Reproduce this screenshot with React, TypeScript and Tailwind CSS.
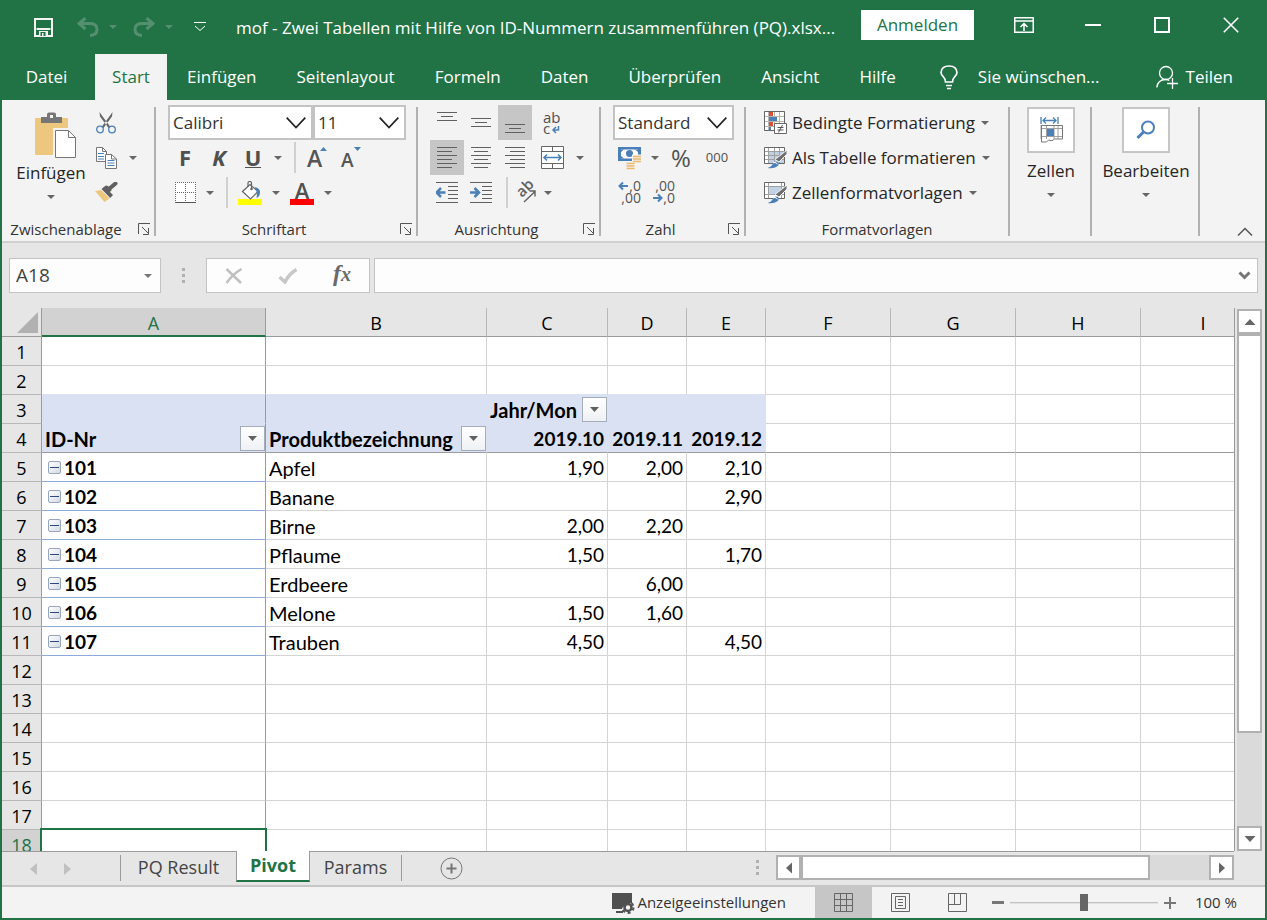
import React from 'react';
import clsx from 'clsx';

type Cell = string | undefined;

interface SheetRow {
  num: number;
  kind: 'empty' | 'head' | 'data';
  cells: Cell[];
}

const TABS = ['Einfügen', 'Seitenlayout', 'Formeln', 'Daten', 'Überprüfen', 'Ansicht', 'Hilfe'];

const COLUMNS = [
  { name: 'A', width: 224 },
  { name: 'B', width: 221 },
  { name: 'C', width: 121 },
  { name: 'D', width: 79 },
  { name: 'E', width: 79 },
  { name: 'F', width: 125 },
  { name: 'G', width: 125 },
  { name: 'H', width: 125 },
  { name: 'I', width: 125 },
];

const empty = (num: number): SheetRow => ({ num, kind: 'empty', cells: [] });

const ROWS: SheetRow[] = [
  empty(1),
  empty(2),
  { num: 3, kind: 'head', cells: ['', '', 'Jahr/Mon', '', ''] },
  { num: 4, kind: 'head', cells: ['ID-Nr', 'Produktbezeichnung', '2019.10', '2019.11', '2019.12'] },
  { num: 5, kind: 'data', cells: ['101', 'Apfel', '1,90', '2,00', '2,10'] },
  { num: 6, kind: 'data', cells: ['102', 'Banane', '', '', '2,90'] },
  { num: 7, kind: 'data', cells: ['103', 'Birne', '2,00', '2,20', ''] },
  { num: 8, kind: 'data', cells: ['104', 'Pflaume', '1,50', '', '1,70'] },
  { num: 9, kind: 'data', cells: ['105', 'Erdbeere', '', '6,00', ''] },
  { num: 10, kind: 'data', cells: ['106', 'Melone', '1,50', '1,60', ''] },
  { num: 11, kind: 'data', cells: ['107', 'Trauben', '4,50', '', '4,50'] },
  empty(12),
  empty(13),
  empty(14),
  empty(15),
  empty(16),
  empty(17),
  empty(18),
];

/* ---------- small shared pieces ---------- */

const Caret: React.FC<{ className?: string }> = ({ className }) => (
  <svg width="8" height="4" viewBox="0 0 8 4" className={clsx('shrink-0', className ?? 'text-[#666]')}>
    <path d="M0 0h8L4 4z" fill="currentColor" />
  </svg>
);

const CaretButton: React.FC<{ label: string }> = ({ label }) => (
  <button aria-label={label} className="flex h-[35px] w-4 items-center justify-center">
    <Caret />
  </button>
);

interface ToolProps {
  label: string;
  width?: string;
  active?: boolean;
  children: React.ReactNode;
}

const Tool: React.FC<ToolProps> = ({ label, width = 'w-[34px]', active, children }) => (
  <button
    aria-label={label}
    className={clsx('flex h-[35px] items-center justify-center text-[#505050]', width, active && 'bg-[#c6c6c6]')}
  >
    {children}
  </button>
);

const Combo: React.FC<{ label: string; value: string; width: string }> = ({ label, value, width }) => (
  <div className={clsx('relative h-[35px]', width)}>
    <select
      aria-label={label}
      className="h-full w-full appearance-none border-2 border-[#c3c3c3] bg-white pl-[3px] text-[17px] text-[#333] outline-none"
    >
      <option>{value}</option>
    </select>
    <svg width="20" height="12" viewBox="0 0 20 12" className="pointer-events-none absolute top-3 right-[7px]">
      <path d="M.7 .7L10 10.5L19.3 .7" fill="none" stroke="#222" strokeWidth="1.7" />
    </svg>
  </div>
);

const Divider = () => <div className="mr-1 ml-2 h-[31px] w-0.5 bg-[#d0d0d0]" />;

interface GroupProps {
  title?: string;
  launcher?: boolean;
  width: string;
  children: React.ReactNode;
}

const Group: React.FC<GroupProps> = ({ title, launcher, width, children }) => (
  <>
    <section className={clsx('flex shrink-0 flex-col pt-[5px]', width)}>
      <div className="h-[105px]">{children}</div>
      <div className="flex flex-1 items-end pb-0.5 text-[15px] leading-5 text-[#333]">
        <span className="flex-1 text-center">{title}</span>
        {launcher && (
          <button aria-label={`${title} Optionen`} className="mb-1 flex w-6 justify-end pr-1">
            <svg width="12" height="12" viewBox="0 0 12 12" fill="none" stroke="#555">
              <path d="M.5 11V.5H12M4 4l6.5 6.5M10.5 5v6.5H5" />
            </svg>
          </button>
        )}
      </div>
    </section>
    <div className="mt-[7px] mb-[5px] w-0.5 shrink-0 bg-[#b1b1b1]" />
  </>
);

/* ---------- icons ---------- */

const PasteIcon = () => (
  <svg width="52" height="47" viewBox="-10 0 52 47">
    <rect x="0" y="6" width="33" height="37" rx="1" fill="#eec77e" />
    <path d="M6 5h6V2.500q0-2 2-2h5q2 0 2 2V5h6v6H6z" fill="#767676" />
    <rect x="15" y="3" width="3" height="3" fill="#f3f3f3" />
    <path d="M19.500 17.500h15l7 7.500v21h-22z" fill="#fff" stroke="#f3f3f3" strokeWidth="3" />
    <path d="M20.500 18.500h13l7 7v20h-20z" fill="#fff" stroke="#767676" />
    <path d="M33.500 18.500v7h7" fill="none" stroke="#767676" />
  </svg>
);

const CutIcon = () => (
  <svg width="20" height="22" viewBox="0 0 20 22">
    <path d="M3.500 0L7 5L14.500 15L12.500 16L4 4.500zM16.500 0L13 5L5.500 15L7.500 16L16 4.500z" fill="#666" />
    <circle cx="4" cy="17.500" r="3.300" fill="#f3f3f3" stroke="#4a7fb8" strokeWidth="1.300" />
    <circle cx="16" cy="17.500" r="3.300" fill="#f3f3f3" stroke="#4a7fb8" strokeWidth="1.300" />
  </svg>
);

const CopyIcon = () => (
  <svg width="21" height="22" viewBox="0 0 21 22" fill="#fff" stroke="#767676">
    <path d="M.5.5h6l4 4v10H.5z" />
    <path d="M6.500.5v4h4" fill="none" />
    <path d="M2 6.500h6M2 9.500h6M2 12h6" stroke="#4a7fb8" />
    <path d="M9.500 7.500h6l5 4.500v9.500h-11z" />
    <path d="M15.500 7.500v4.500h5" fill="none" />
    <path d="M11.500 13.500h7M11.500 16h7M11.500 18.500h7" stroke="#4a7fb8" />
  </svg>
);

const BrushIcon = () => (
  <svg width="23" height="21" viewBox="0 0 23 21">
    <path d="M0 9l6-1l8.500 8.500L9.500 20z" fill="#eec77e" />
    <path d="M6.500 7l3-2.500L18 13l-2.800 3z" fill="#606060" />
    <path d="M11.500 5.500L14 8l-1 1M14 7l6.500-5.500" stroke="#606060" strokeWidth="4" fill="none" strokeLinecap="round" />
  </svg>
);

const BorderIcon = () => (
  <svg width="21" height="21" viewBox="0 0 21 21">
    <rect width="21" height="21" fill="#fff" />
    <path d="M0 .5h21M0 10.500h21M.5 0v21M10.500 0v21M20.500 0v21" stroke="#666" strokeDasharray="1 1" fill="none" />
    <path d="M0 20.500h21" stroke="#555" />
  </svg>
);

const FillIcon = () => (
  <svg width="24" height="24" viewBox="0 0 24 24">
    <rect y="18" width="24" height="6" fill="#ff0" />
    <path d="M4.500 10.500l7.500-7l8 7l-7.500 7.500z" fill="#fff" stroke="#666" strokeWidth="1.200" />
    <path d="M10 6V2q0-1.500 1.800-1.500Q13.500.5 13.500 2v6" fill="none" stroke="#666" strokeWidth="1.200" />
    <circle cx="13.500" cy="8" r="1.300" fill="#666" />
    <path d="M16.500 6q6 1 5.500 6q-.5 4-3.500 5q1.500-6-2-11z" fill="#4a7fb8" />
  </svg>
);

const FontColorIcon = () => (
  <span className="flex flex-col items-center">
    <span className="text-[22px] leading-[18px] font-semibold">A</span>
    <span className="h-[6px] w-6 bg-[#f00]" />
  </span>
);

const GrowFont = () => (
  <svg width="22" height="22" viewBox="0 0 22 22" className="overflow-visible">
    <text x="1" y="20" fontSize="23" fontWeight="600" fill="#555">A</text>
    <path d="M14 4h7L17.500 0z" fill="#4a7fb8" />
  </svg>
);

const ShrinkFont = () => (
  <svg width="22" height="22" viewBox="0 0 22 22" className="overflow-visible">
    <text x="1" y="20" fontSize="19" fontWeight="600" fill="#555">A</text>
    <path d="M14 0h7l-3.500 4z" fill="#4a7fb8" />
  </svg>
);

// stacks of text lines, given as [x, y, width]
const Lines: React.FC<{ lines: number[][]; children?: React.ReactNode }> = ({ lines, children }) => (
  <svg width="22" height="22" viewBox="0 0 22 22">
    {lines.map(([x, y, w]) => (
      <path key={y} d={`M${x} ${y + 0.5}h${w}`} stroke="#606060" />
    ))}
    {children}
  </svg>
);

const TOP = [[1, 0, 20], [5, 4, 12], [1, 8, 20]];
const MIDDLE = [[1, 6, 20], [5, 10, 12], [1, 14, 20]];
const BOTTOM = [[1, 12, 20], [5, 16, 12], [1, 20, 20]];
const LEFT = [[1, 0, 20], [1, 4, 15], [1, 8, 20], [1, 12, 15], [1, 16, 20], [1, 20, 15]];
const CENTER = [[1, 0, 20], [4, 4, 14], [1, 8, 20], [4, 12, 14], [1, 16, 20], [4, 20, 14]];
const RIGHT = [[1, 0, 20], [6, 4, 15], [1, 8, 20], [6, 12, 15], [1, 16, 20], [6, 20, 15]];
const INDENT = [[0, 0, 22], [12, 4, 10], [12, 8, 10], [12, 12, 10], [12, 16, 10], [0, 20, 22]];

const WrapIcon = () => (
  <svg width="20" height="24" viewBox="0 0 20 24" className="overflow-visible">
    <text x="1" y="12" fontSize="15" fontWeight="500" fill="#505050">ab</text>
    <text x="1" y="23" fontSize="15" fontWeight="500" fill="#505050">c</text>
    <path d="M16.500 15v4h-5M14 16l-3 3l3 3" fill="none" stroke="#4a7fb8" strokeWidth="1.500" />
  </svg>
);

const MergeIcon = () => (
  <svg width="23" height="23" viewBox="0 0 23 23" fill="none" stroke="#666">
    <path d="M.5.500h22v22H.5zM.5 5.500h22M.5 17.500h22M11.500.5v5M11.500 17.500v5" fill="#fff" />
    <path d="M3 11.500h17M6 8.500l-3 3l3 3M17 8.500l3 3l-3 3" stroke="#4a7fb8" strokeWidth="1.500" />
  </svg>
);

const OrientationIcon = () => (
  <svg width="22" height="22" viewBox="0 0 22 22" className="overflow-visible">
    <text x="0" y="0" fontSize="15" fontWeight="600" fill="#606060" transform="translate(7 16) rotate(-45)">ab</text>
    <path d="M9 20L20 9.500M14.500 9h5.500v5.500" fill="none" stroke="#606060" strokeWidth="1.400" />
  </svg>
);

const MoneyIcon = () => (
  <svg width="24" height="24" viewBox="0 0 24 24">
    <rect x="0" y="1" width="23" height="14" fill="#4a7fb8" />
    <path d="M3 3.500h17v9H3z" fill="#fff" />
    <path d="M3 3.500h3L3 6zM20 3.500h-3L20 6zM3 12.500h3L3 10z" fill="#4a7fb8" />
    <circle cx="11.500" cy="7.500" r="3.500" fill="#4a7fb8" />
    <path d="M14 8.500h10v9H18V23H7v-8h7z" fill="#f3f3f3" />
    <path d="M15 10.500h8M15 13h8M15 15.500h8M8.500 17.500h8M8.500 20h8M8.500 22.500h8" stroke="#eab96c" strokeWidth="1.700" />
  </svg>
);

const DecimalIcon: React.FC<{ less?: boolean }> = ({ less }) => (
  <svg width="24" height="26" viewBox="0 0 24 26" fontSize="14" fill="#555" className="overflow-visible">
    <text x="23" y="11" textAnchor="end">{less ? ',00' : ',0'}</text>
    <text x="23" y="23" textAnchor="end">{less ? ',0' : ',00'}</text>
    {less ? (
      <path d="M1 18h8M6 14.500l3.500 3.500L6 21.500" fill="none" stroke="#4a7fb8" strokeWidth="2" />
    ) : (
      <path d="M10 6H2M5 2.500L1.500 6L5 9.500" fill="none" stroke="#4a7fb8" strokeWidth="2" />
    )}
  </svg>
);

const StyleBrush = () => (
  <>
    <path d="M25 4v4l-8 8l-4-2.500z" fill="#707070" stroke="#f3f3f3" />
    <path d="M5.500 22q4-1 5.500-4.500q2-3 5-1.500q2 2.500-1 4.500q-3 2.500-9.500 1.500z" fill="#4a7fb8" />
    <path d="M11 17q2-1.500 4 .5l1 1" stroke="#fff" fill="none" />
  </>
);

const ConditionalIcon = () => (
  <svg width="26" height="24" viewBox="0 0 26 24">
    <path d="M2.500.5h20v19h-20zM2.500 5.500h20M2.500 10.500h20M2.500 15.500h20M6.500.5v19M12.500.5v19M17.500.5v19" fill="#fff" stroke="#b5b5b5" />
    <path d="M2.500.5h20v19h-20z" fill="none" stroke="#666" />
    <path d="M7 1h4v4H7zM7 11h4v4H7z" fill="#d8502f" />
    <path d="M7 6h8v4H7zM7 16h2v3H7z" fill="#4a7fb8" />
    <path d="M12.500 12.500h12v10h-12z" fill="#fff" stroke="#666" />
    <path d="M15.500 16.500h6M15.500 19h6M20.500 14l-4 7.500" stroke="#555" />
  </svg>
);

const FormatTableIcon = () => (
  <svg width="26" height="24" viewBox="0 0 26 24">
    <path d="M2.500 1.500h20v16h-20z" fill="#fff" />
    <path d="M7 6h15v12H7z" fill="#c0d2e6" />
    <path d="M2.500 5.500h20M2.500 9.500h20M2.500 13.500h20M6.500 1.500v16M12.500 1.500v16M17.500 1.500v16" stroke="#a0a0a0" />
    <path d="M2.500 1.500h20v16h-20z" fill="none" stroke="#666" />
    <StyleBrush />
  </svg>
);

const CellStyleIcon = () => (
  <svg width="26" height="24" viewBox="0 0 26 24">
    <path d="M2.500 1.500h20v16h-20z" fill="#fff" />
    <path d="M7 6h12v8H7z" fill="#c0d2e6" />
    <path d="M2.500 5.500h20M2.500 13.500h20M6.500 1.500v16M19.500 1.500v16" stroke="#a0a0a0" />
    <path d="M2.500 1.500h20v16h-20z" fill="none" stroke="#666" />
    <StyleBrush />
  </svg>
);

const CellsIcon = () => (
  <svg width="23" height="26" viewBox="0 0 23 26" fill="none">
    <path d="M1 0v7M18 0v7M3 3.500h13M6 .5l-3 3l3 3M13 .5l3 3l-3 3" stroke="#4a7fb8" strokeWidth="1.300" />
    <path d="M1 8v14M6.500 8v14M14 8v14M18 8v14M1 11.500h21M1 19.500h21" stroke="#a0a0a0" />
    <path d="M1.500 8.500h21v13.500h-8q-2 3-6 1l-2 2h-5z" stroke="#767676" />
    <path d="M7 12h7v7H7z" fill="#4a7fb8" />
  </svg>
);

const SearchIcon = () => (
  <svg width="20" height="20" viewBox="0 0 20 20" fill="none" stroke="#4a7fb8">
    <circle cx="12" cy="7.500" r="6" strokeWidth="2" />
    <path d="M7.500 12L1.500 18" strokeWidth="3" />
  </svg>
);

/* ---------- window chrome ---------- */

const UndoArrow: React.FC<{ flip?: boolean }> = ({ flip }) => (
  <svg width="22" height="20" viewBox="0 0 22 20" className={clsx(flip && '-scale-x-100')}>
    <path d="M8.500 1L2 6.500l6.500 5.500M2.500 6.500H14q6 .5 6 6t-7 6" fill="none" stroke="#549070" strokeWidth="3" />
  </svg>
);

const TitleBar = () => (
  <header className="flex h-[54px] items-start text-white">
    <div className="flex h-[54px] flex-1 items-center pl-8">
      <button aria-label="Speichern" className="w-[43px]">
        <svg width="19" height="19" viewBox="0 0 19 19" fill="none" stroke="#f3f3f3">
          <path d="M1 1h17v17H1z" strokeWidth="2" />
          <path d="M2.500 11h14" strokeWidth="2" />
          <path d="M5 13h9v5H5z" fill="#f3f3f3" stroke="none" />
          <path d="M6.500 14h5v4h-5z" fill="#217346" stroke="none" />
          <path d="M8 15h1.500v3H8z" fill="#f3f3f3" stroke="none" />
        </svg>
      </button>
      <button aria-label="Rückgängig" className="flex w-14 items-center gap-2.5">
        <UndoArrow />
        <Caret className="text-[#549070]" />
      </button>
      <button aria-label="Wiederholen" className="flex w-[61px] items-center gap-2.5">
        <UndoArrow flip />
        <Caret className="text-[#549070]" />
      </button>
      <button aria-label="Symbolleiste anpassen" className="w-[42px]">
        <svg width="12" height="10" viewBox="0 0 12 10" fill="none" stroke="#fff">
          <path d="M0 .5h12M1 4l5 4.500L11 4" />
        </svg>
      </button>
      <h1 className="truncate pt-0.5 text-[17px]">mof - Zwei Tabellen mit Hilfe von ID-Nummern zusammenführen (PQ).xlsx...</h1>
    </div>
    <button className="mt-2.5 mr-[15px] h-[30px] w-[113px] shrink-0 bg-white text-[17px] text-[#217346]">Anmelden</button>
    <div className="flex h-[50px] shrink-0">
      <button aria-label="Menüband-Anzeigeoptionen" className="flex w-[69px] items-center justify-center">
        <svg width="20" height="16" viewBox="0 0 20 16" fill="none" stroke="#fff" strokeWidth="1.500">
          <path d="M.75.75h18.500v14.500H.75zM1 4h18M10 14V7M6.500 10L10 6.500l3.500 3.500" />
        </svg>
      </button>
      <button aria-label="Minimieren" className="flex w-[69px] items-center justify-center">
        <span className="h-0.5 w-4 bg-white" />
      </button>
      <button aria-label="Maximieren" className="flex w-[69px] items-center justify-center">
        <span className="size-4 border-2 border-white" />
      </button>
      <button aria-label="Schließen" className="flex w-[69px] items-center justify-center">
        <svg width="16" height="16" viewBox="0 0 16 16" stroke="#fff" strokeWidth="1.600">
          <path d="M.8.8l14.400 14.400M15.200.8L.8 15.200" />
        </svg>
      </button>
    </div>
  </header>
);

const RibbonTabs = () => (
  <nav className="flex h-[46px] text-[17px] whitespace-nowrap text-white">
    <button className="w-[93px] pr-1">Datei</button>
    <button className="w-[72px] bg-[#f3f3f3] text-[#217346]">Start</button>
    {TABS.map((tab) => (
      <button key={tab} className="px-5">
        {tab}
      </button>
    ))}
    <button className="flex items-center gap-5 pl-6">
      <svg width="18" height="25" viewBox="0 0 18 25" fill="none" stroke="#fff" strokeWidth="1.700">
        <path d="M5.500 17q0-3-2-5Q1 9.500 1 7.500Q1.500 1 9 1t8 6.500q0 2-2.500 4.500q-2 2-2 5zM6 20.500h6M7 23.500h4" />
      </svg>
      Sie wünschen...
    </button>
    <button className="ml-auto flex items-center gap-2 pr-8">
      <svg width="22" height="24" viewBox="0 0 22 24" fill="none" stroke="#fff" strokeWidth="1.300">
        <circle cx="10" cy="8" r="6.500" />
        <path d="M.8 22.500q1-8 9-8q2 0 3.500 1M11 18.500h11M16.500 13v11" />
      </svg>
      Teilen
    </button>
  </nav>
);

const StyleItem: React.FC<{ label: string; icon: React.ReactNode }> = ({ label, icon }) => (
  <button className="flex h-[35px] items-center gap-1 text-[17px] whitespace-nowrap text-[#262626]">
    {icon}
    {label}
    <Caret className="ml-0.5 text-[#666]" />
  </button>
);

const BigTool: React.FC<{ label: string; icon: React.ReactNode }> = ({ label, icon }) => (
  <button className="flex w-full flex-col items-center pt-0.5 pl-0.5 text-[17px] text-[#262626]">
    <span className="flex h-[46px] w-12 items-center justify-center border-2 border-[#c6c6c6] bg-white">{icon}</span>
    <span className="mt-1.5 mb-2.5 leading-6">{label}</span>
    <Caret />
  </button>
);

const Ribbon = () => (
  <div className="flex h-[143px] shrink-0 overflow-hidden border-b-2 border-[#d0d0d0] bg-[#f3f3f3]">
    <Group title="Zwischenablage" launcher width="w-[152px]">
      <div className="flex pl-2">
        <button className="flex w-[82px] flex-col items-center pt-[7px] text-[17px] text-[#262626]">
          <PasteIcon />
          <span className="mt-0.5 mb-2.5 leading-6">Einfügen</span>
          <Caret />
        </button>
        <div>
          <Tool label="Ausschneiden" width="w-7"><CutIcon /></Tool>
          <div className="flex">
            <Tool label="Kopieren" width="w-7"><CopyIcon /></Tool>
            <span className="w-[5px]" />
            <CaretButton label="Kopieroptionen" />
          </div>
          <Tool label="Format übertragen" width="w-7"><BrushIcon /></Tool>
        </div>
      </div>
    </Group>

    <Group title="Schriftart" launcher width="w-[260px]">
      <div className="pl-3">
        <div className="flex">
          <Combo label="Schriftart" value="Calibri" width="w-[145px]" />
          <Combo label="Schriftgrad" value="11" width="w-[93px]" />
        </div>
        <div className="flex items-center">
          <Tool label="Fett"><b className="text-[22px]">F</b></Tool>
          <Tool label="Kursiv"><b className="text-[22px] italic">K</b></Tool>
          <Tool label="Unterstrichen"><b className="border-b border-[#505050] text-[22px] leading-5">U</b></Tool>
          <CaretButton label="Unterstreichung wählen" />
          <Divider />
          <Tool label="Schriftgrad vergrößern"><GrowFont /></Tool>
          <Tool label="Schriftgrad verkleinern"><ShrinkFont /></Tool>
        </div>
        <div className="flex items-center">
          <Tool label="Rahmen"><BorderIcon /></Tool>
          <CaretButton label="Rahmen wählen" />
          <Divider />
          <Tool label="Füllfarbe" width="w-9"><FillIcon /></Tool>
          <CaretButton label="Füllfarbe wählen" />
          <Tool label="Schriftfarbe" width="w-9"><FontColorIcon /></Tool>
          <CaretButton label="Schriftfarbe wählen" />
        </div>
      </div>
    </Group>

    <Group title="Ausrichtung" launcher width="w-[181px]">
      <div className="pl-3">
        <div className="flex">
          <Tool label="Oben ausrichten"><Lines lines={TOP} /></Tool>
          <Tool label="Zentriert ausrichten"><Lines lines={MIDDLE} /></Tool>
          <Tool label="Unten ausrichten" active><Lines lines={BOTTOM} /></Tool>
          <Tool label="Textumbruch" width="w-10"><WrapIcon /></Tool>
        </div>
        <div className="flex">
          <Tool label="Linksbündig" active><Lines lines={LEFT} /></Tool>
          <Tool label="Zentriert"><Lines lines={CENTER} /></Tool>
          <Tool label="Rechtsbündig"><Lines lines={RIGHT} /></Tool>
          <Tool label="Verbinden und zentrieren" width="w-10"><MergeIcon /></Tool>
          <CaretButton label="Verbinden wählen" />
        </div>
        <div className="flex items-center">
          <Tool label="Einzug verkleinern">
            <Lines lines={INDENT}>
              <path d="M9.500 10.500H1M5 6l-4.500 4.500L5 15" fill="none" stroke="#4a7fb8" strokeWidth="2.500" />
            </Lines>
          </Tool>
          <Tool label="Einzug vergrößern">
            <Lines lines={INDENT}>
              <path d="M0 10.500h8.500M4.500 6L9 10.500L4.500 15" fill="none" stroke="#4a7fb8" strokeWidth="2.500" />
            </Lines>
          </Tool>
          <Divider />
          <Tool label="Ausrichtung" width="w-7"><OrientationIcon /></Tool>
          <CaretButton label="Ausrichtung wählen" />
        </div>
      </div>
    </Group>

    <Group title="Zahl" launcher width="w-[143px]">
      <div className="pl-3">
        <Combo label="Zahlenformat" value="Standard" width="w-[121px]" />
        <div className="flex">
          <Tool label="Buchhaltungszahlenformat"><MoneyIcon /></Tool>
          <CaretButton label="Währung wählen" />
          <Tool label="Prozentformat" width="w-9"><span className="text-2xl">%</span></Tool>
          <Tool label="1.000er-Trennzeichen" width="w-9"><span className="text-[13px]">000</span></Tool>
        </div>
        <div className="flex">
          <Tool label="Dezimalstelle hinzufügen"><DecimalIcon /></Tool>
          <Tool label="Dezimalstelle löschen"><DecimalIcon less /></Tool>
        </div>
      </div>
    </Group>

    <Group title="Formatvorlagen" width="w-[262px]">
      <div className="pl-4">
        <StyleItem label="Bedingte Formatierung" icon={<ConditionalIcon />} />
        <StyleItem label="Als Tabelle formatieren" icon={<FormatTableIcon />} />
        <StyleItem label="Zellenformatvorlagen" icon={<CellStyleIcon />} />
      </div>
    </Group>

    <Group width="w-20">
      <BigTool label="Zellen" icon={<CellsIcon />} />
    </Group>

    <Group width="w-[106px]">
      <BigTool label="Bearbeiten" icon={<SearchIcon />} />
    </Group>

    <button aria-label="Menüband reduzieren" className="mt-auto mr-3 mb-[5px] ml-auto">
      <svg width="16" height="9" viewBox="0 0 16 9" fill="none" stroke="#555" strokeWidth="1.500">
        <path d="M1 8.500L8 1.500L15 8.500" />
      </svg>
    </button>
  </div>
);

const Dots = () => (
  <span className="flex flex-col gap-[3px]">
    <span className="size-[3px] bg-[#b0b0b0]" />
    <span className="size-[3px] bg-[#b0b0b0]" />
    <span className="size-[3px] bg-[#b0b0b0]" />
  </span>
);

const FormulaBar = () => (
  <div className="flex h-[65px] shrink-0 items-center px-[7px]">
    <div className="flex h-[35px] w-[152px] items-center border border-[#c3c3c3] bg-[#fdfdfd] pr-2">
      <input aria-label="Namenfeld" defaultValue="A18" className="w-full min-w-0 bg-transparent pl-1.5 text-[19px] text-[#444] outline-none" />
      <button aria-label="Namen anzeigen">
        <Caret className="text-[#777]" />
      </button>
    </div>
    <div className="flex w-[45px] justify-center">
      <Dots />
    </div>
    <div className="mr-1 flex h-[35px] w-[164px] items-center border border-[#c3c3c3] bg-[#fdfdfd]">
      <button aria-label="Abbrechen" className="flex w-[54px] justify-center">
        <svg width="18" height="16" viewBox="0 0 18 16" fill="none" stroke="#c0c0c0" strokeWidth="2.500">
          <path d="M1.500 1L16 15M16.500 1Q8 6 1.500 15" />
        </svg>
      </button>
      <button aria-label="Eingeben" className="flex w-[54px] justify-center">
        <svg width="20" height="16" viewBox="0 0 20 16" fill="none" stroke="#c8c8c8" strokeWidth="3.500">
          <path d="M1.500 9l5.500 5Q11 6 18.500 1.500" />
        </svg>
      </button>
      <button
        aria-label="Funktion einfügen"
        className="w-[54px] pb-1 font-['Liberation_Serif',serif] text-2xl leading-7 font-bold text-[#6a6a6a] italic"
      >
        f<span className="text-xl">x</span>
      </button>
    </div>
    <div className="flex h-[35px] flex-1 items-center border border-[#c3c3c3] bg-[#fdfdfd] pr-1.5">
      <input aria-label="Bearbeitungsleiste" className="h-full w-full bg-transparent px-2 text-[19px] outline-none" />
      <button aria-label="Bearbeitungsleiste erweitern">
        <svg width="13" height="9" viewBox="0 0 13 9" fill="none" stroke="#757575" strokeWidth="3">
          <path d="M1.500 1.500l5 5l5-5" />
        </svg>
      </button>
    </div>
  </div>
);

/* ---------- sheet ---------- */

const FilterButton = () => (
  <button
    aria-label="Filter"
    className="mb-px ml-auto flex size-[25px] shrink-0 items-center justify-center border border-[#a5adb8] bg-linear-to-b from-white to-[#eef1f4]"
  >
    <svg width="9" height="5" viewBox="0 0 9 5">
      <path d="M0 0h9L4.500 5z" fill="#606060" />
    </svg>
  </button>
);

const CollapseButton = () => (
  <button
    aria-label="Reduzieren"
    className="mr-[3px] mb-0.5 ml-1.5 flex size-[13px] items-center justify-center rounded-xs border border-[#98a6bd] bg-linear-to-br from-white to-[#d5dae2]"
  >
    <span className="h-px w-[9px] bg-[#2f4a80]" />
  </button>
);

const isFiltered = (row: SheetRow, col: number) => (row.num === 4 && col < 2) || (row.num === 3 && col === 2);

const bottomBorder = (row: SheetRow, col: number) => {
  if (row.num === 4) return 'border-b-[#9b9b9b]';
  if (col < 5 && (row.num === 2 || row.num === 3)) return 'border-b-[#d9e1f2]';
  if (row.kind === 'data' && col === 0) return 'border-b-[#8ea9db]';
  return 'border-b-[#d4d4d4]';
};

const SheetCell: React.FC<{ row: SheetRow; col: number }> = ({ row, col }) => {
  const inHead = row.kind === 'head' && col < 5;
  const isId = row.kind === 'data' && col === 0;
  const isNumber = col > 1 && !isFiltered(row, col);
  const selected = row.num === 18 && col === 0;

  return (
    <td
      className={clsx(
        'relative h-[29px] border-r border-b p-0',
        inHead && 'bg-[#d9e1f2] font-bold',
        col === 0 ? 'border-r-[#9b9b9b]' : inHead ? 'border-r-[#d9e1f2]' : 'border-r-[#d4d4d4]',
        bottomBorder(row, col),
      )}
    >
      <div
        className={clsx(
          'flex h-7 items-center pt-0.5 leading-6 whitespace-nowrap',
          isNumber ? 'justify-end pr-[3px]' : !isId && 'pl-[3px]',
          isNumber || isId ? 'text-[19px]' : 'text-[20px]',
          isId && 'font-bold',
        )}
      >
        {isId && <CollapseButton />}
        {row.cells[col]}
        {isFiltered(row, col) && <FilterButton />}
      </div>
      {selected && <span className="absolute -top-0.5 -right-0.5 bottom-0 -left-0.5 border-2 border-b-0 border-[#217346]" />}
    </td>
  );
};

const Sheet = () => (
  <div className="min-w-0 flex-1 overflow-hidden">
    <table className="w-[1264px] table-fixed border-separate border-spacing-0">
      <colgroup>
        <col className="w-10" />
        {COLUMNS.map((c) => (
          <col key={c.name} style={{ width: c.width }} />
        ))}
      </colgroup>
      <thead>
        <tr className="text-[18px]">
          <th className="h-[29px] border-r border-b border-[#9b9b9b] p-0 align-bottom">
            <svg width="21" height="21" viewBox="0 0 21 21" className="mr-[3px] mb-[3px] ml-auto">
              <path d="M21 0v21H0z" fill="#b1b1b1" />
            </svg>
          </th>
          {COLUMNS.map((c, i) => (
            <th
              key={c.name}
              className={clsx(
                'h-[29px] border-r p-0 pt-0.5 leading-6 font-normal',
                i === 0 ? 'border-b-2 border-r-[#9b9b9b] border-b-[#217346] bg-[#d2d2d2] text-[#217346]' : 'border-b border-r-[#b8b8b8] border-b-[#9b9b9b]',
              )}
            >
              {c.name}
            </th>
          ))}
        </tr>
      </thead>
      <tbody className="bg-white font-['Lato',sans-serif] text-black">
        {ROWS.map((row) => (
          <tr key={row.num}>
            <th
              className={clsx(
                "h-[29px] border-r border-b border-[#b8b8b8] border-r-[#9b9b9b] p-0 pt-0.5 font-['Open_Sans',sans-serif] text-[18px] leading-6 font-normal",
                row.num === 18 ? 'bg-[#d2d2d2] text-[#217346]' : 'bg-[#e6e6e6]',
              )}
            >
              {row.num}
            </th>
            {COLUMNS.map((c, i) => (
              <SheetCell key={c.name} row={row} col={i} />
            ))}
          </tr>
        ))}
      </tbody>
    </table>
  </div>
);

const ScrollArrow: React.FC<{ label: string; d: string }> = ({ label, d }) => (
  <button aria-label={label} className="flex size-[25px] shrink-0 items-center justify-center border-2 border-[#b1b1b1] bg-white">
    <svg width="12" height="12" viewBox="0 0 12 12">
      <path d={d} fill="#666" />
    </svg>
  </button>
);

const VerticalScroll = () => (
  <div className="flex w-[31px] shrink-0 flex-col border-l border-[#9b9b9b] pt-px pr-[3px] pl-[2px]">
    <ScrollArrow label="Nach oben" d="M0.500 9h11L6 3z" />
    <div className="flex-1 bg-[#dadada]">
      <div className="h-[81%] w-[25px] border-2 border-[#b1b1b1] bg-white" />
    </div>
    <ScrollArrow label="Nach unten" d="M0.500 3h11L6 9z" />
  </div>
);

const SheetTabs = () => (
  <div className="flex h-[34px] shrink-0 text-[18px] text-[#444]">
    <div className="flex w-[118px] items-center gap-[27px] border-t border-[#9b9b9b] pl-7">
      <button aria-label="Vorheriges Blatt">
        <svg width="7" height="12" viewBox="0 0 7 12"><path d="M7 0v12L0 6z" fill="#c0c0c0" /></svg>
      </button>
      <button aria-label="Nächstes Blatt">
        <svg width="7" height="12" viewBox="0 0 7 12"><path d="M0 0v12l7-6z" fill="#c0c0c0" /></svg>
      </button>
    </div>
    <div className="flex border-t border-[#9b9b9b] pt-[3px] pb-1">
      <button className="w-[116px] border-l border-[#9b9b9b] pb-1 leading-6">PQ Result</button>
    </div>
    <button className="h-[31px] w-[74px] border-x border-b-2 border-x-[#9b9b9b] border-b-[#217346] bg-white font-bold text-[#217346]">
      Pivot
    </button>
    <div className="flex flex-1 border-t border-[#9b9b9b] pt-[3px]">
      <button className="h-[26px] w-[92px] border-r border-[#9b9b9b] pb-1 leading-6">Params</button>
      <button aria-label="Neues Blatt" className="ml-[38px] h-[27px]">
        <svg width="23" height="23" viewBox="0 0 23 23" fill="none" stroke="#767676">
          <circle cx="11.500" cy="11.500" r="10.500" />
          <path d="M6.500 11.500h10M11.500 6.500v10" strokeWidth="2" />
        </svg>
      </button>
      <span className="mt-[5px] mr-[17px] ml-auto">
        <Dots />
      </span>
      <div className="flex h-[25px] w-[458px] bg-[#dadada]">
        <ScrollArrow label="Nach links" d="M9 .5v11L3 6z" />
        <div className="mr-auto w-[349px] border-2 border-[#b1b1b1] bg-white" />
        <ScrollArrow label="Nach rechts" d="M3 .5v11L9 6z" />
      </div>
    </div>
    <div className="w-[31px] shrink-0" />
  </div>
);

const StatusBar = () => (
  <footer className="flex h-[33px] shrink-0 items-center border-t-2 border-[#c6c6c6] bg-[#f3f3f3] text-[15px] text-[#333]">
    <button className="mr-[29px] ml-auto flex items-center gap-0.5 whitespace-nowrap">
      <svg width="24" height="22" viewBox="0 0 24 22">
        <path d="M1 1h20v10q-9 0-10 6H1z" fill="#505050" />
        <path d="M5 20h7" stroke="#505050" strokeWidth="2" />
        <circle cx="17" cy="15.500" r="3.500" fill="none" stroke="#505050" strokeWidth="2.500" />
        <circle cx="17" cy="15.500" r="5.500" fill="none" stroke="#505050" strokeWidth="2" strokeDasharray="3 2.760" />
      </svg>
      Anzeigeeinstellungen
    </button>
    <button aria-label="Normal" className="flex h-full w-[57px] items-center justify-center bg-[#c6c6c6]">
      <svg width="19" height="19" viewBox="0 0 19 19" fill="none" stroke="#666">
        <path d="M.5.5h18v18H.5zM6.500.5v18M12.500.5v18M.5 6.500h18M.5 12.500h18" />
      </svg>
    </button>
    <button aria-label="Seitenlayout" className="flex h-full w-[57px] items-center justify-center">
      <svg width="19" height="19" viewBox="0 0 19 19" fill="none" stroke="#666">
        <path d="M.5.5h18v18H.5zM4.500 3.500h10v12h-10zM7 6.500h5M7 9.500h5M7 12.500h5" />
      </svg>
    </button>
    <button aria-label="Umbruchvorschau" className="flex h-full w-[57px] items-center justify-center">
      <svg width="19" height="19" viewBox="0 0 19 19" fill="none" stroke="#666">
        <path d="M.5.5h18v18H.5zM.5 11.500h12V.5M6.500.5v11" />
      </svg>
    </button>
    <button aria-label="Verkleinern" className="mx-1.5 h-5 w-3">
      <span className="block h-[3px] bg-[#777]" />
    </button>
    <input
      type="range"
      aria-label="Zoom"
      defaultValue={50}
      className="h-5 w-[148px] appearance-none bg-linear-to-b from-transparent from-45% via-[#b1b1b1] via-45% to-transparent to-55% [&::-webkit-slider-thumb]:h-[17px] [&::-webkit-slider-thumb]:w-2 [&::-webkit-slider-thumb]:appearance-none [&::-webkit-slider-thumb]:bg-[#666]"
    />
    <button aria-label="Vergrößern" className="mr-[17px] ml-1.5">
      <svg width="12" height="12" viewBox="0 0 12 12" stroke="#777" strokeWidth="2">
        <path d="M0 6h12M6 0v12" />
      </svg>
    </button>
    <span className="mr-7 w-11 text-right whitespace-nowrap">100 %</span>
  </footer>
);

export default function App() {
  return (
    <div className="flex h-screen flex-col overflow-hidden border-x-2 border-b-2 border-[#217346] bg-[#e6e6e6] font-['Open_Sans',sans-serif]">
      <div className="shrink-0 bg-[#217346]">
        <TitleBar />
        <RibbonTabs />
      </div>
      <Ribbon />
      <FormulaBar />
      <div className="flex min-h-0 flex-1">
        <Sheet />
        <VerticalScroll />
      </div>
      <SheetTabs />
      <StatusBar />
    </div>
  );
}
